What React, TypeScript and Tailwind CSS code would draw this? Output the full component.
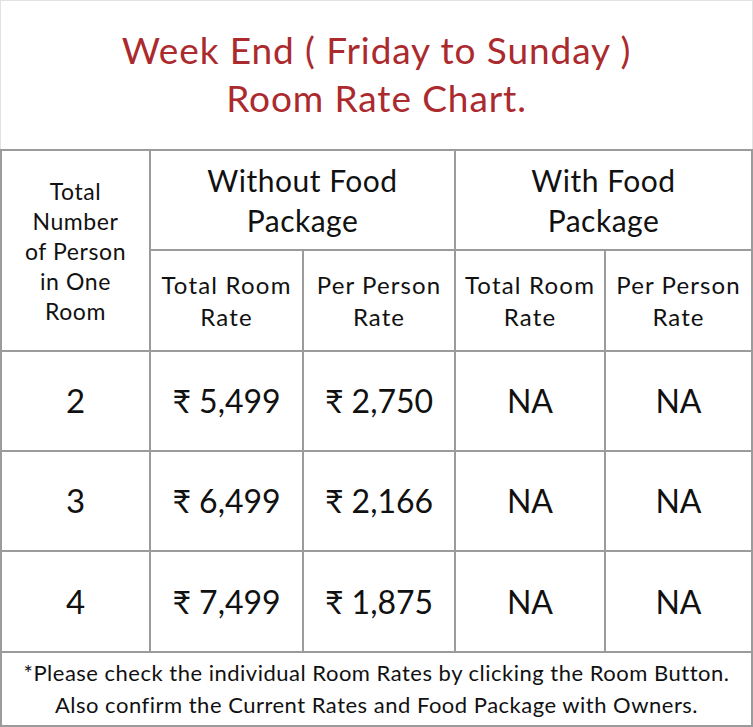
import React from "react";

const rows = [
  { n: "2", total: "₹ 5,499", per: "₹ 2,750" },
  { n: "3", total: "₹ 6,499", per: "₹ 2,166" },
  { n: "4", total: "₹ 7,499", per: "₹ 1,875" },
];

const cell = "bg-white flex items-center justify-center text-center";

export default function App() {
  return (
    <div className="w-[753px] h-[727px] bg-white flex flex-col font-['Lato',sans-serif] text-[#111111]">
      <div className="h-[149px] border-t border-l border-r border-[#e2e2e2] flex flex-col items-center justify-center pb-[3px]">
        <div className="text-[37px] leading-[48px] tracking-[0.9px] text-[#ab2a2e] text-center">
          <div>Week End ( Friday to Sunday )</div>
          <div>Room Rate Chart.</div>
        </div>
      </div>
      <div className="grid grid-cols-[147px_151px_150px_148px_145px] grid-rows-[98px_99px_98px_98px_99px_72px] gap-[2px] p-[2px] bg-[#9b9b9b]">
        <div className={`${cell} row-span-2 text-[23px] leading-[30px] tracking-[0.6px]`}>
          <div>
            Total
            <br />
            Number
            <br />
            of Person
            <br />
            in One
            <br />
            Room
          </div>
        </div>
        <div className={`${cell} col-span-2 text-[30px] leading-[40px] tracking-[0.5px]`}>
          <div>
            Without Food
            <br />
            Package
          </div>
        </div>
        <div className={`${cell} col-span-2 text-[30px] leading-[40px] tracking-[0.5px]`}>
          <div>
            With Food
            <br />
            Package
          </div>
        </div>
        <div className={`${cell} text-[24px] leading-[32px] tracking-[1.2px]`}>
          <div>
            Total Room
            <br />
            Rate
          </div>
        </div>
        <div className={`${cell} text-[24px] leading-[32px] tracking-[1.1px]`}>
          <div>
            Per Person
            <br />
            Rate
          </div>
        </div>
        <div className={`${cell} text-[24px] leading-[32px] tracking-[1.2px]`}>
          <div>
            Total Room
            <br />
            Rate
          </div>
        </div>
        <div className={`${cell} text-[24px] leading-[32px] tracking-[1.1px]`}>
          <div>
            Per Person
            <br />
            Rate
          </div>
        </div>
        {rows.map((r) => (
          <React.Fragment key={r.n}>
            <div className={`${cell} text-[33px]`}>{r.n}</div>
            <div className={`${cell} text-[32px]`}>{r.total}</div>
            <div className={`${cell} text-[32px]`}>{r.per}</div>
            <div className={`${cell} text-[32px]`}>NA</div>
            <div className={`${cell} text-[32px]`}>NA</div>
          </React.Fragment>
        ))}
        <div className={`${cell} col-span-5 text-[22px] leading-[32px] tracking-[0.5px]`}>
          <div>
            *Please check the individual Room Rates by clicking the Room Button.
            <br />
            Also confirm the Current Rates and Food Package with Owners.
          </div>
        </div>
      </div>
    </div>
  );
}
